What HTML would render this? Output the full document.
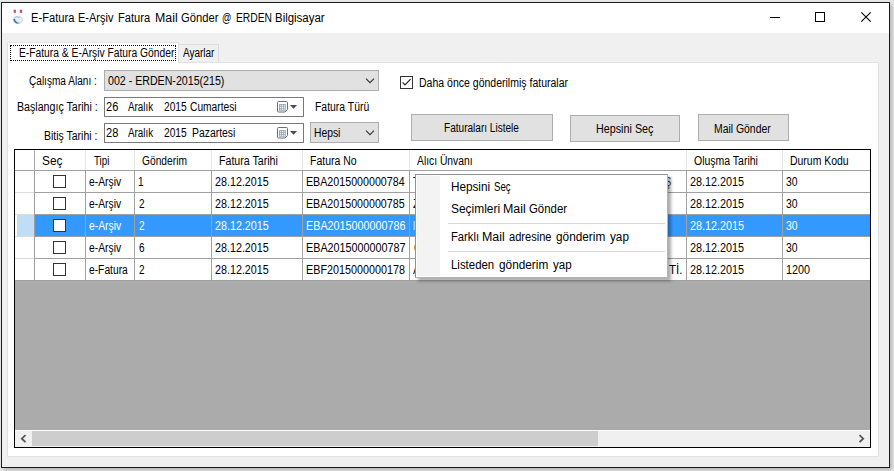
<!DOCTYPE html>
<html lang="tr">
<head>
<meta charset="utf-8">
<title>E-Fatura E-Arşiv Fatura Mail Gönder @ ERDEN Bilgisayar</title>
<style>
html,body{margin:0;padding:0;}
body{width:894px;height:471px;overflow:hidden;background:#e9e9e9;position:relative;font-family:"Liberation Sans","DejaVu Sans",sans-serif;}
.abs,.t,div,svg{position:absolute;box-sizing:border-box;}
.t{white-space:pre;transform-origin:0 50%;display:block;}
#win{left:1px;top:2px;width:889px;height:466px;border:1px solid #1c1c1c;background:#f0f0f0;box-shadow:2px 2px 4px rgba(0,0,0,.24);}
#titlebar{left:2px;top:3px;width:887px;height:30px;background:#fff;}
#inner{left:2px;top:33px;width:1px;height:434px;background:#fafafa;}
#innerr{left:888px;top:33px;width:1px;height:434px;background:#fafafa;}
#tabpage{left:7px;top:62px;width:872px;height:395px;background:#fff;border:1px solid #e2e2e2;}
#tab1{left:7px;top:42px;width:172px;height:21px;background:#fff;border:1px solid #e2e2e2;border-bottom:none;}
#tab2{left:178px;top:44px;width:41px;height:18px;background:#f0f0f0;border:1px solid #dcdcdc;border-bottom:none;}
#focus{left:10px;top:45px;width:166px;height:16px;border:1px dotted #000;}
.combo{background:#e1e1e1;border:1px solid #adadad;}
.dtp{background:#fff;border:1px solid #7a7a7a;}
.btn{background:#e1e1e1;border:1px solid #adadad;}
.cb{background:#fff;border:1px solid #333;width:13px;height:13px;}
#grid{left:14px;top:149px;width:857px;height:299px;border:1px solid #000;background:#ababab;}
.hl{background:#a0a0a0;}
</style>
</head>
<body>
<div id="win"></div>
<div id="titlebar"></div>

<!-- title icon -->
<svg style="left:12px;top:9px" width="12" height="16" viewBox="0 0 12 16">
 <rect x="1.7" y="0.7" width="2.2" height="3.2" fill="#cc4f6e"/>
 <rect x="7.8" y="0.7" width="2.4" height="3.2" fill="#cc4f6e"/>
 <rect x="1.2" y="4.8" width="3" height="0.6" fill="#d4d4d4"/>
 <rect x="7.4" y="4.8" width="3" height="0.6" fill="#d4d4d4"/>
 <ellipse cx="5.9" cy="10.9" rx="4.6" ry="3.8" fill="#e6ecf1" stroke="#c3ccd4" stroke-width=".7"/>
 <path d="M1.5 10.2 C1.6 13.6 4.8 15.2 7.6 14 C5.4 13.8 3.2 12.8 2.9 9.6 Z" fill="#1f76ad"/>
 <path d="M2.2 8.8 C3 7.4 5.2 7 6.4 7.6 C5 8 3.4 8.6 2.2 8.8Z" fill="#b4bec8"/>
 <path d="M5.2 8.6 C6.4 8 7.6 8.2 8 9 C7 8.9 6 9.2 5.2 8.6Z" fill="#5aa9d6"/>
</svg>

<!-- window buttons -->
<svg style="left:760px;top:3px" width="129" height="30" viewBox="0 0 129 30">
 <path d="M10 14.5 H20" stroke="#000" stroke-width="1" fill="none"/>
 <rect x="55.5" y="9.5" width="9" height="9" stroke="#000" stroke-width="1" fill="none"/>
 <path d="M101.3 9.3 L110.7 18.7 M110.7 9.3 L101.3 18.7" stroke="#000" stroke-width="1.1" fill="none"/>
</svg>

<!-- tabs -->
<div id="tabpage"></div>
<div id="tab2"></div>
<div id="tab1"></div>
<div id="focus"></div>

<!-- controls -->
<div class="combo" style="left:104px;top:70px;width:275px;height:21px"></div>
<svg style="left:365px;top:78px" width="10" height="6" viewBox="0 0 10 6"><path d="M1 0.7 L5 4.7 L9 0.7" stroke="#333" stroke-width="1.1" fill="none"/></svg>
<div class="dtp" style="left:104px;top:97px;width:200px;height:20px"></div>
<div class="dtp" style="left:104px;top:123px;width:200px;height:20px"></div>
<div class="combo" style="left:310px;top:122px;width:69px;height:21px"></div>
<svg style="left:365px;top:130px" width="10" height="6" viewBox="0 0 10 6"><path d="M1 0.7 L5 4.7 L9 0.7" stroke="#333" stroke-width="1.1" fill="none"/></svg>

<!-- calendar icons -->
<svg style="left:277px;top:101px" width="21" height="12" viewBox="0 0 21 12">
 <path d="M1.5 .5 H9.5 Q10.5 .5 10.5 1.5 V8.5 L8 11 H1.5 Q.5 11 .5 10 V1.5 Q.5 .5 1.5 .5Z" fill="#fff" stroke="#6e6e6e" stroke-width="1"/>
 <rect x="2" y="3" width="6.8" height="6.8" fill="#9dabc3"/>
 <g fill="#fff"><rect x="3.2" y="4.2" width="1" height="1"/><rect x="5" y="4.2" width="1" height="1"/><rect x="6.8" y="4.2" width="1" height="1"/><rect x="3.2" y="6" width="1" height="1"/><rect x="5" y="6" width="1" height="1"/><rect x="6.8" y="6" width="1" height="1"/><rect x="3.2" y="7.8" width="1" height="1"/><rect x="5" y="7.8" width="1" height="1"/><rect x="6.8" y="7.8" width="1" height="1"/></g>
 <path d="M13 4 H20 L16.5 7.8Z" fill="#3f4a6b"/>
</svg>
<svg style="left:277px;top:127px" width="21" height="12" viewBox="0 0 21 12">
 <path d="M1.5 .5 H9.5 Q10.5 .5 10.5 1.5 V8.5 L8 11 H1.5 Q.5 11 .5 10 V1.5 Q.5 .5 1.5 .5Z" fill="#fff" stroke="#6e6e6e" stroke-width="1"/>
 <rect x="2" y="3" width="6.8" height="6.8" fill="#9dabc3"/>
 <g fill="#fff"><rect x="3.2" y="4.2" width="1" height="1"/><rect x="5" y="4.2" width="1" height="1"/><rect x="6.8" y="4.2" width="1" height="1"/><rect x="3.2" y="6" width="1" height="1"/><rect x="5" y="6" width="1" height="1"/><rect x="6.8" y="6" width="1" height="1"/><rect x="3.2" y="7.8" width="1" height="1"/><rect x="5" y="7.8" width="1" height="1"/><rect x="6.8" y="7.8" width="1" height="1"/></g>
 <path d="M13 4 H20 L16.5 7.8Z" fill="#3f4a6b"/>
</svg>

<!-- checkbox -->
<div class="cb" style="left:400px;top:76px"></div>
<svg style="left:400px;top:76px" width="13" height="13" viewBox="0 0 13 13"><path d="M2.6 6.4 L5 8.9 L10.6 3.2" stroke="#222" stroke-width="1.2" fill="none"/></svg>

<!-- buttons -->
<div class="btn" style="left:411px;top:114px;width:142px;height:27px"></div>
<div class="btn" style="left:570px;top:115px;width:110px;height:27px"></div>
<div class="btn" style="left:698px;top:114px;width:91px;height:27px"></div>

<!-- grid -->
<div id="grid"></div>
<!-- header -->
<div style="left:15px;top:150px;width:855px;height:21px;background:#fff;border-bottom:1px solid #a0a0a0"></div>
<!-- rows -->
<div style="left:15px;top:171px;width:855px;height:110px;background:#fff"></div>
<div style="left:17px;top:215px;width:17px;height:21px;background:#bfddf5"></div>
<div style="left:35px;top:215px;width:835px;height:21px;background:#3399ff"></div>
<!-- horizontal lines -->
<div class="hl" style="left:15px;top:192px;width:855px;height:1px"></div>
<div class="hl" style="left:15px;top:214px;width:855px;height:1px"></div>
<div class="hl" style="left:15px;top:236px;width:855px;height:1px"></div>
<div class="hl" style="left:15px;top:258px;width:855px;height:1px"></div>
<div class="hl" style="left:15px;top:280px;width:855px;height:1px"></div>
<div style="left:15px;top:192px;width:19px;height:1px;background:#dcdcdc"></div><div style="left:15px;top:214px;width:19px;height:1px;background:#dcdcdc"></div><div style="left:15px;top:236px;width:19px;height:1px;background:#dcdcdc"></div><div style="left:15px;top:258px;width:19px;height:1px;background:#dcdcdc"></div>
<!-- vertical lines: header (light) -->
<div style="left:34px;top:150px;width:1px;height:20px;background:#a8a8a8"></div>
<div style="left:85px;top:150px;width:1px;height:20px;background:#e5e5e5"></div>
<div style="left:134px;top:150px;width:1px;height:20px;background:#e5e5e5"></div>
<div style="left:211px;top:150px;width:1px;height:20px;background:#e5e5e5"></div>
<div style="left:302px;top:150px;width:1px;height:20px;background:#e5e5e5"></div>
<div style="left:409px;top:150px;width:1px;height:20px;background:#e5e5e5"></div>
<div style="left:686px;top:150px;width:1px;height:20px;background:#e5e5e5"></div>
<div style="left:782px;top:150px;width:1px;height:20px;background:#e5e5e5"></div>
<!-- vertical lines: cells -->
<div class="hl" style="left:34px;top:171px;width:1px;height:110px"></div>
<div class="hl" style="left:85px;top:171px;width:1px;height:110px"></div>
<div class="hl" style="left:134px;top:171px;width:1px;height:110px"></div>
<div class="hl" style="left:211px;top:171px;width:1px;height:110px"></div>
<div class="hl" style="left:302px;top:171px;width:1px;height:110px"></div>
<div class="hl" style="left:409px;top:171px;width:1px;height:110px"></div>
<div class="hl" style="left:686px;top:171px;width:1px;height:110px"></div>
<div class="hl" style="left:782px;top:171px;width:1px;height:110px"></div>
<!-- row checkboxes -->
<div class="cb" style="left:53px;top:175px"></div>
<div class="cb" style="left:53px;top:197px"></div>
<div class="cb" style="left:53px;top:219px"></div>
<div class="cb" style="left:53px;top:241px"></div>
<div class="cb" style="left:53px;top:263px"></div>

<!-- scrollbar -->
<div style="left:15px;top:430px;width:855px;height:17px;background:#f0f0f0"></div>
<div style="left:15px;top:430px;width:855px;height:1px;background:#fbfbfb"></div>
<div style="left:32px;top:431px;width:566px;height:15px;background:#cdcdcd"></div>
<svg style="left:15px;top:430px" width="17" height="17" viewBox="0 0 17 17"><path d="M10.5 5.2 L6.8 8.7 L10.5 12.2" stroke="#555" stroke-width="1.8" fill="none"/></svg>
<svg style="left:853px;top:430px" width="17" height="17" viewBox="0 0 17 17"><path d="M6.5 5.2 L10.2 8.7 L6.5 12.2" stroke="#555" stroke-width="1.8" fill="none"/></svg>

<span class="t" style="left:30.67px;top:9.84px;font-size:12px;line-height:16px;color:#000;transform:scaleX(0.9304);">E-Fatura </span>
<span class="t" style="left:77.68px;top:9.84px;font-size:12px;line-height:16px;color:#000;transform:scaleX(0.9158);">E-Arşiv </span>
<span class="t" style="left:117.67px;top:9.84px;font-size:12px;line-height:16px;color:#000;transform:scaleX(0.9265);">Fatura </span>
<span class="t" style="left:155.17px;top:9.84px;font-size:12px;line-height:16px;color:#000;transform:scaleX(1.0286);">Mail </span>
<span class="t" style="left:180.90px;top:9.84px;font-size:12px;line-height:16px;color:#000;transform:scaleX(0.9350);">Gönder </span>
<span class="t" style="left:222.43px;top:9.84px;font-size:12px;line-height:16px;color:#000;transform:scaleX(0.7727);">@ </span>
<span class="t" style="left:236.04px;top:9.84px;font-size:12px;line-height:16px;color:#000;transform:scaleX(0.8575);">ERDEN </span>
<span class="t" style="left:274.75px;top:9.84px;font-size:12px;line-height:16px;color:#000;transform:scaleX(0.9529);">Bilgisayar</span>
<span class="t" style="left:19.14px;top:44.84px;font-size:12px;line-height:16px;color:#000;transform:scaleX(0.8564);">E-Fatura &amp; E-Arşiv Fatura Gönder</span>
<span class="t" style="left:183.40px;top:45.44px;font-size:12px;line-height:16px;color:#000;transform:scaleX(0.8316);">Ayarlar</span>
<span class="t" style="left:29.00px;top:73.34px;font-size:12px;line-height:16px;color:#000;transform:scaleX(0.8400);">Çalışma Alanı :</span>
<span class="t" style="left:17.41px;top:99.04px;font-size:12px;line-height:16px;color:#000;transform:scaleX(0.8865);">Başlangıç Tarihi :</span>
<span class="t" style="left:44.13px;top:127.84px;font-size:12px;line-height:16px;color:#000;transform:scaleX(0.8729);">Bitiş Tarihi :</span>
<span class="t" style="left:108.00px;top:72.84px;font-size:12px;line-height:16px;color:#000;transform:scaleX(0.8855);">002 - ERDEN-2015(215)</span>
<span class="t" style="left:106.00px;top:98.84px;font-size:12px;line-height:16px;color:#000;transform:scaleX(0.9231);">26</span>
<span class="t" style="left:128.00px;top:98.84px;font-size:12px;line-height:16px;color:#000;transform:scaleX(0.8226);">Aralık</span>
<span class="t" style="left:164.00px;top:98.84px;font-size:12px;line-height:16px;color:#000;transform:scaleX(0.8519);">2015</span>
<span class="t" style="left:190.00px;top:98.84px;font-size:12px;line-height:16px;color:#000;transform:scaleX(0.8519);">Cumartesi</span>
<span class="t" style="left:106.00px;top:124.84px;font-size:12px;line-height:16px;color:#000;transform:scaleX(0.9231);">28</span>
<span class="t" style="left:128.00px;top:124.84px;font-size:12px;line-height:16px;color:#000;transform:scaleX(0.8226);">Aralık</span>
<span class="t" style="left:164.00px;top:124.84px;font-size:12px;line-height:16px;color:#000;transform:scaleX(0.8519);">2015</span>
<span class="t" style="left:191.63px;top:124.84px;font-size:12px;line-height:16px;color:#000;transform:scaleX(0.8673);">Pazartesi</span>
<span class="t" style="left:315.43px;top:98.84px;font-size:12px;line-height:16px;color:#000;transform:scaleX(0.8672);">Fatura Türü</span>
<span class="t" style="left:313.84px;top:124.54px;font-size:12px;line-height:16px;color:#000;transform:scaleX(0.8586);">Hepsi</span>
<span class="t" style="left:419.02px;top:75.44px;font-size:12px;line-height:16px;color:#000;transform:scaleX(0.8763);">Daha önce gönderilmiş faturalar</span>
<span class="t" style="left:443.96px;top:119.84px;font-size:12px;line-height:16px;color:#000;transform:scaleX(0.8386);">Faturaları Listele</span>
<span class="t" style="left:596.40px;top:121.34px;font-size:12px;line-height:16px;color:#000;transform:scaleX(0.8968);">Hepsini Seç</span>
<span class="t" style="left:714.13px;top:120.64px;font-size:12px;line-height:16px;color:#000;transform:scaleX(0.8672);">Mail Gönder</span>
<span class="t" style="left:42.31px;top:153.24px;font-size:12px;line-height:16px;color:#000;transform:scaleX(0.9850);">Seç</span>
<span class="t" style="left:94.00px;top:153.24px;font-size:12px;line-height:16px;color:#000;transform:scaleX(0.8158);">Tipi</span>
<span class="t" style="left:141.60px;top:153.24px;font-size:12px;line-height:16px;color:#000;transform:scaleX(0.8538);">Gönderim</span>
<span class="t" style="left:218.62px;top:153.24px;font-size:12px;line-height:16px;color:#000;transform:scaleX(0.8846);">Fatura Tarihi</span>
<span class="t" style="left:310.12px;top:153.24px;font-size:12px;line-height:16px;color:#000;transform:scaleX(0.8750);">Fatura No</span>
<span class="t" style="left:417.00px;top:153.24px;font-size:12px;line-height:16px;color:#000;transform:scaleX(0.8594);">Alıcı Ünvanı</span>
<span class="t" style="left:693.60px;top:153.24px;font-size:12px;line-height:16px;color:#000;transform:scaleX(0.8740);">Oluşma Tarihi</span>
<span class="t" style="left:789.63px;top:153.24px;font-size:12px;line-height:16px;color:#000;transform:scaleX(0.8712);">Durum Kodu</span>
<span class="t" style="left:88.70px;top:174.34px;font-size:12px;line-height:16px;color:#000;transform:scaleX(0.8595);">e-Arşiv</span>
<span class="t" style="left:138.47px;top:174.34px;font-size:12px;line-height:16px;color:#000;transform:scaleX(0.8333);">1</span>
<span class="t" style="left:215.00px;top:174.34px;font-size:12px;line-height:16px;color:#000;transform:scaleX(0.8950);">28.12.2015</span>
<span class="t" style="left:306.41px;top:174.34px;font-size:12px;line-height:16px;color:#000;transform:scaleX(0.8900);">EBA2015000000784</span>
<span class="t" style="left:690.00px;top:174.34px;font-size:12px;line-height:16px;color:#000;transform:scaleX(0.9000);">28.12.2015</span>
<span class="t" style="left:786.40px;top:174.34px;font-size:12px;line-height:16px;color:#000;transform:scaleX(0.8692);">30</span>
<span class="t" style="left:88.70px;top:196.34px;font-size:12px;line-height:16px;color:#000;transform:scaleX(0.8595);">e-Arşiv</span>
<span class="t" style="left:139.30px;top:196.34px;font-size:12px;line-height:16px;color:#000;transform:scaleX(0.8333);">2</span>
<span class="t" style="left:215.00px;top:196.34px;font-size:12px;line-height:16px;color:#000;transform:scaleX(0.8950);">28.12.2015</span>
<span class="t" style="left:306.41px;top:196.34px;font-size:12px;line-height:16px;color:#000;transform:scaleX(0.8900);">EBA2015000000785</span>
<span class="t" style="left:690.00px;top:196.34px;font-size:12px;line-height:16px;color:#000;transform:scaleX(0.9000);">28.12.2015</span>
<span class="t" style="left:786.40px;top:196.34px;font-size:12px;line-height:16px;color:#000;transform:scaleX(0.8692);">30</span>
<span class="t" style="left:88.70px;top:218.34px;font-size:12px;line-height:16px;color:#fff;transform:scaleX(0.8595);">e-Arşiv</span>
<span class="t" style="left:139.30px;top:218.34px;font-size:12px;line-height:16px;color:#fff;transform:scaleX(0.8333);">2</span>
<span class="t" style="left:215.00px;top:218.34px;font-size:12px;line-height:16px;color:#fff;transform:scaleX(0.8950);">28.12.2015</span>
<span class="t" style="left:306.40px;top:218.34px;font-size:12px;line-height:16px;color:#fff;transform:scaleX(0.8982);">EBA2015000000786</span>
<span class="t" style="left:690.00px;top:218.34px;font-size:12px;line-height:16px;color:#fff;transform:scaleX(0.9000);">28.12.2015</span>
<span class="t" style="left:786.40px;top:218.34px;font-size:12px;line-height:16px;color:#fff;transform:scaleX(0.8692);">30</span>
<span class="t" style="left:88.70px;top:240.34px;font-size:12px;line-height:16px;color:#000;transform:scaleX(0.8595);">e-Arşiv</span>
<span class="t" style="left:139.30px;top:240.34px;font-size:12px;line-height:16px;color:#000;transform:scaleX(0.8333);">6</span>
<span class="t" style="left:215.00px;top:240.34px;font-size:12px;line-height:16px;color:#000;transform:scaleX(0.8950);">28.12.2015</span>
<span class="t" style="left:306.40px;top:240.34px;font-size:12px;line-height:16px;color:#000;transform:scaleX(0.8982);">EBA2015000000787</span>
<span class="t" style="left:690.00px;top:240.34px;font-size:12px;line-height:16px;color:#000;transform:scaleX(0.9000);">28.12.2015</span>
<span class="t" style="left:786.40px;top:240.34px;font-size:12px;line-height:16px;color:#000;transform:scaleX(0.8692);">30</span>
<span class="t" style="left:88.70px;top:262.34px;font-size:12px;line-height:16px;color:#000;transform:scaleX(0.8543);">e-Fatura</span>
<span class="t" style="left:139.30px;top:262.34px;font-size:12px;line-height:16px;color:#000;transform:scaleX(0.8333);">2</span>
<span class="t" style="left:215.00px;top:262.34px;font-size:12px;line-height:16px;color:#000;transform:scaleX(0.8950);">28.12.2015</span>
<span class="t" style="left:306.40px;top:262.34px;font-size:12px;line-height:16px;color:#000;transform:scaleX(0.8982);">EBF2015000000178</span>
<span class="t" style="left:690.00px;top:262.34px;font-size:12px;line-height:16px;color:#000;transform:scaleX(0.9000);">28.12.2015</span>
<span class="t" style="left:785.50px;top:262.34px;font-size:12px;line-height:16px;color:#000;transform:scaleX(0.9000);">1200</span>
<span class="t" style="left:668.50px;top:262.34px;font-size:12px;line-height:16px;color:#000;transform:scaleX(0.9615);">Tİ.</span>
<span class="t" style="left:665.21px;top:174.34px;font-size:12px;line-height:16px;color:#444;transform:scaleX(0.7857);">Ş</span>
<span class="t" style="left:413.40px;top:174.34px;font-size:12px;line-height:16px;color:#000;transform:scaleX(0.9143);">T</span>
<span class="t" style="left:413.40px;top:196.34px;font-size:12px;line-height:16px;color:#000;transform:scaleX(0.9143);">Z</span>
<span class="t" style="left:413.20px;top:218.34px;font-size:12px;line-height:16px;color:#fff;transform:scaleX(0.6000);">I</span>
<span class="t" style="left:413.60px;top:240.34px;font-size:12px;line-height:16px;color:#000;transform:scaleX(0.8222);">G</span>
<span class="t" style="left:413.20px;top:262.34px;font-size:12px;line-height:16px;color:#000;transform:scaleX(0.9250);">A</span>

<!-- context menu -->
<div style="left:415px;top:174px;width:253px;height:104px;background:#fff;border:1px solid #929292;border-right-color:#b4b4b4;border-bottom-color:#b4b4b4;box-shadow:3px 3px 3px rgba(0,0,0,.33)"></div>
<div style="left:417px;top:176px;width:23px;height:100px;background:#f3f3f3"></div>
<div style="left:448px;top:223px;width:217px;height:1px;background:#d7d7d7"></div>
<div style="left:448px;top:251px;width:217px;height:1px;background:#d7d7d7"></div>
<span class="t" style="left:450.82px;top:178.84px;font-size:12px;line-height:16px;color:#000;transform:scaleX(0.9769);">Hepsini </span>
<span class="t" style="left:494.19px;top:178.84px;font-size:12px;line-height:16px;color:#000;transform:scaleX(0.8050);">Seç</span>
<span class="t" style="left:450.81px;top:200.84px;font-size:12px;line-height:16px;color:#000;transform:scaleX(0.9937);">Seçimleri </span>
<span class="t" style="left:503.37px;top:200.84px;font-size:12px;line-height:16px;color:#000;transform:scaleX(1.0333);">Mail </span>
<span class="t" style="left:529.00px;top:200.84px;font-size:12px;line-height:16px;color:#000;transform:scaleX(0.9500);">Gönder</span>
<span class="t" style="left:450.86px;top:228.84px;font-size:12px;line-height:16px;color:#000;transform:scaleX(0.9357);">Farklı </span>
<span class="t" style="left:482.47px;top:228.84px;font-size:12px;line-height:16px;color:#000;transform:scaleX(1.0333);">Mail </span>
<span class="t" style="left:508.90px;top:228.84px;font-size:12px;line-height:16px;color:#000;transform:scaleX(0.9239);">adresine </span>
<span class="t" style="left:555.90px;top:228.84px;font-size:12px;line-height:16px;color:#000;transform:scaleX(0.9840);">gönderim </span>
<span class="t" style="left:610.00px;top:228.84px;font-size:12px;line-height:16px;color:#000;transform:scaleX(0.9789);">yap</span>
<span class="t" style="left:450.85px;top:257.14px;font-size:12px;line-height:16px;color:#000;transform:scaleX(0.9523);">Listeden </span>
<span class="t" style="left:498.80px;top:257.14px;font-size:12px;line-height:16px;color:#000;transform:scaleX(0.9840);">gönderim </span>
<span class="t" style="left:553.20px;top:257.14px;font-size:12px;line-height:16px;color:#000;transform:scaleX(0.9632);">yap</span>
</body>
</html>
